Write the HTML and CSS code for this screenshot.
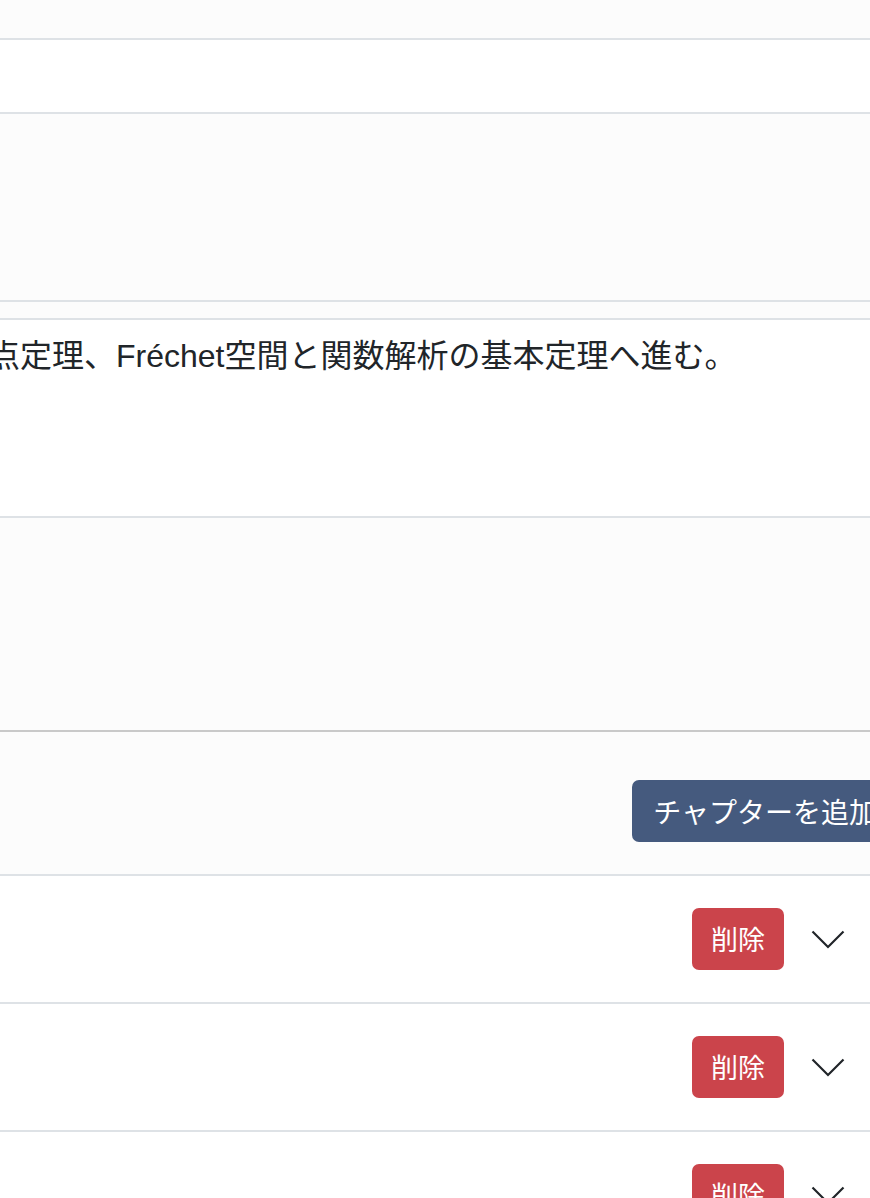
FILE: index.html
```html
<!DOCTYPE html>
<html lang="ja">
<head>
<meta charset="utf-8">
<title>コース編集</title>
<link rel="stylesheet" href="styles.css">
</head>
<body>
<main class="page">
  <section class="band band-muted band-h38"></section>
  <section class="band band-h72"></section>
  <section class="band band-muted band-h186"></section>
  <section class="band band-muted band-h16"></section>
  <section class="band description">
    <p class="desc-text">点定理、Fréchet空間と関数解析の基本定理へ進む。</p>
  </section>
  <section class="band band-muted band-h212 band-strong"></section>
  <section class="band band-muted add-row">
    <button class="btn btn-primary">チャプターを追加</button>
  </section>
  <section class="chapter">
    <div class="chapter-actions">
      <button class="btn btn-danger">削除</button>
      <span class="chevron"><svg viewBox="0 0 34 19" width="34" height="19"><path d="M1.5 1.5 L17 17 L32.5 1.5" fill="none" stroke="#212529" stroke-width="2.2"/></svg></span>
    </div>
  </section>
  <section class="chapter">
    <div class="chapter-actions">
      <button class="btn btn-danger">削除</button>
      <span class="chevron"><svg viewBox="0 0 34 19" width="34" height="19"><path d="M1.5 1.5 L17 17 L32.5 1.5" fill="none" stroke="#212529" stroke-width="2.2"/></svg></span>
    </div>
  </section>
  <section class="chapter">
    <div class="chapter-actions">
      <button class="btn btn-danger">削除</button>
      <span class="chevron"><svg viewBox="0 0 34 19" width="34" height="19"><path d="M1.5 1.5 L17 17 L32.5 1.5" fill="none" stroke="#212529" stroke-width="2.2"/></svg></span>
    </div>
  </section>
</main>
</body>
</html>
```

FILE: styles.css
```css
html, body {
  margin: 0;
  padding: 0;
  background: #ffffff;
  overflow: hidden;
}

body {
  font-family: "Liberation Sans", "Noto Sans CJK JP", sans-serif;
  color: #212529;
}

.page {
  display: flex;
  flex-direction: column;
  width: 100%;
}

.band {
  border-bottom: 2px solid #dee2e6;
  background: #ffffff;
}

.band-muted {
  background: #fcfcfc;
}

.band-strong {
  border-bottom-color: #c9c9c9;
}

.band-h38 { height: 38px; }
.band-h72 { height: 72px; }
.band-h186 { height: 186px; }
.band-h16 { height: 16px; }
.band-h212 { height: 212px; }

.description {
  height: 198px;
  box-sizing: border-box;
  padding-top: 12px;
}

.desc-text {
  margin: 0 0 0 -12px;
  font-size: 32px;
  line-height: 48px;
  white-space: nowrap;
  font-family: "Liberation Sans", "Noto Sans CJK JP", sans-serif;
}

.add-row {
  height: 144px;
  box-sizing: border-box;
  display: flex;
  justify-content: flex-end;
  align-items: flex-start;
  padding-top: 48px;
  margin-right: -26px;
}

.btn {
  font-family: "Noto Sans CJK JP", sans-serif;
  font-size: 27px;
  line-height: 42px;
  height: 62px;
  box-sizing: border-box;
  padding: 10px 19px;
  border: none;
  border-radius: 7px;
  color: #ffffff;
  white-space: nowrap;
}

.btn-primary {
  background: #455a7e;
  font-size: 28px;
  padding-left: 21px;
}

.btn-danger {
  background: #cb444b;
}

.chapter {
  height: 128px;
  box-sizing: border-box;
  border-bottom: 2px solid #dee2e6;
  display: flex;
  align-items: center;
  justify-content: flex-end;
  padding-right: 25px;
}

.chapter-actions {
  display: flex;
  align-items: center;
  gap: 27px;
}

.chevron {
  display: flex;
  align-items: center;
  width: 34px;
  height: 19px;
}
```
